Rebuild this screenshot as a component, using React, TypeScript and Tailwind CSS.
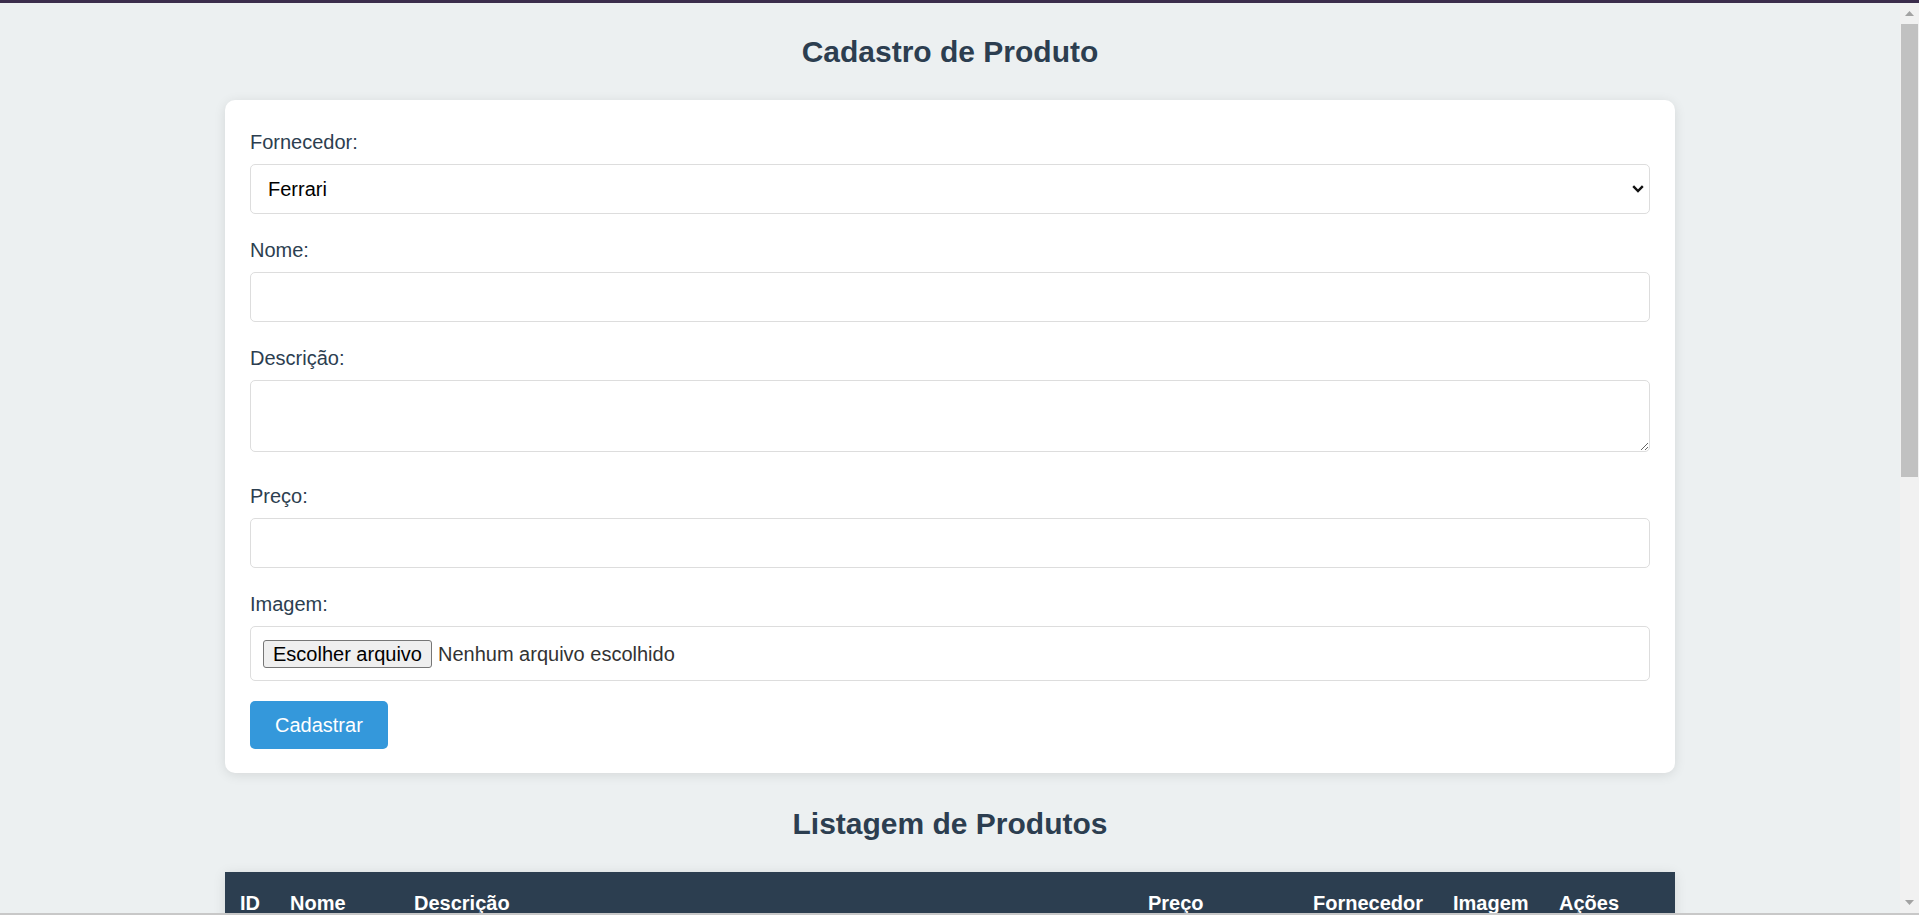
import { useState } from 'react';

const fornecedores = ['Ferrari', 'Lamborghini', 'Porsche'];

const colunas = [
  { label: 'ID', width: 'w-[50px]' },
  { label: 'Nome', width: 'w-[124px]' },
  { label: 'Descrição', width: 'w-[734px]' },
  { label: 'Preço', width: 'w-[165px]' },
  { label: 'Fornecedor', width: 'w-[140px]' },
  { label: 'Imagem', width: 'w-[106px]' },
  { label: 'Ações', width: 'w-[131px]' },
];

function Label({ children }: { children: React.ReactNode }) {
  return <label className="block text-[20px] leading-[32px] mb-[6px] text-[#2c3e50]">{children}</label>;
}

function Scrollbar() {
  return (
    <div className="w-[19px] shrink-0 bg-[#f1f1f1] flex flex-col items-center">
      <div className="h-[21px] w-full flex items-center justify-center">
        <svg width="9" height="5" viewBox="0 0 9 5">
          <path d="M4.5 0 L9 5 L0 5 Z" fill="#a3a3a3" />
        </svg>
      </div>
      <div className="w-[17px] h-[453px] bg-[#c1c1c1]" />
      <div className="flex-1" />
      <div className="h-[21px] w-full flex items-center justify-center">
        <svg width="9" height="5" viewBox="0 0 9 5">
          <path d="M0 0 L9 0 L4.5 5 Z" fill="#a3a3a3" />
        </svg>
      </div>
    </div>
  );
}

export default function App() {
  const [fornecedor, setFornecedor] = useState('Ferrari');
  const [nome, setNome] = useState('');
  const [descricao, setDescricao] = useState('');
  const [preco, setPreco] = useState('');

  const inputClass =
    'block w-full h-[50px] px-[12px] border border-[#ddd] rounded-[5px] bg-white text-[20px] text-black outline-none';

  return (
    <div
      className="h-screen flex flex-col overflow-hidden bg-[#ecf0f1]"
      style={{ fontFamily: '"Liberation Sans", Arial, sans-serif' }}
    >
      <div className="h-[3px] shrink-0 bg-[#3b2d4c]" />
      <div className="flex flex-1 min-h-0">
        <main className="flex-1 overflow-hidden">
          <h2 className="mt-[25px] mb-[24px] text-center text-[30px] leading-[48px] font-bold text-[#2c3e50]">
            Cadastro de Produto
          </h2>

          <form
            className="max-w-[1450px] mx-auto bg-white rounded-[10px] shadow-[0_2px_12px_rgba(0,0,0,0.1)] pt-[26px] px-[25px] pb-[24px]"
            onSubmit={(e) => e.preventDefault()}
          >
            <div className="mb-[20px]">
              <Label>Fornecedor:</Label>
              <div className="relative">
                <select
                  value={fornecedor}
                  onChange={(e) => setFornecedor(e.target.value)}
                  className="block w-full h-[50px] pl-[17px] pr-[40px] border border-[#ddd] rounded-[5px] bg-white text-[20px] text-black appearance-none outline-none"
                >
                  {fornecedores.map((f) => (
                    <option key={f} value={f}>
                      {f}
                    </option>
                  ))}
                </select>
                <svg
                  className="absolute right-[6px] top-[21px] pointer-events-none"
                  width="12"
                  height="8"
                  viewBox="0 0 12 8"
                  fill="none"
                >
                  <path d="M1.2 1.2 L6 6 L10.8 1.2" stroke="#111" strokeWidth="2.4" />
                </svg>
              </div>
            </div>

            <div className="mb-[20px]">
              <Label>Nome:</Label>
              <input type="text" value={nome} onChange={(e) => setNome(e.target.value)} className={inputClass} />
            </div>

            <div className="mb-[28px]">
              <Label>Descrição:</Label>
              <textarea
                value={descricao}
                onChange={(e) => setDescricao(e.target.value)}
                className="block w-full h-[72px] px-[12px] py-[12px] border border-[#ddd] rounded-[5px] bg-white text-[20px] text-black outline-none resize-y"
              />
            </div>

            <div className="mb-[20px]">
              <Label>Preço:</Label>
              <input type="text" value={preco} onChange={(e) => setPreco(e.target.value)} className={inputClass} />
            </div>

            <div className="mb-[20px]">
              <Label>Imagem:</Label>
              <div className="h-[55px] px-[12px] flex items-center gap-[6px] border border-[#ddd] rounded-[5px] bg-white">
                <span className="h-[28px] px-[9px] flex items-center bg-[#efefef] border border-[#767676] rounded-[3px] text-[20px] text-black">
                  Escolher arquivo
                </span>
                <span className="text-[20px] text-[#333]">Nenhum arquivo escolhido</span>
              </div>
            </div>

            <button
              type="submit"
              className="h-[48px] px-[25px] bg-[#3498db] text-white text-[20px] rounded-[5px]"
            >
              Cadastrar
            </button>
          </form>

          <h2 className="mt-[27px] mb-[24px] text-center text-[30px] leading-[48px] font-bold text-[#2c3e50]">
            Listagem de Produtos
          </h2>

          <div className="max-w-[1450px] mx-auto bg-white shadow-[0_2px_12px_rgba(0,0,0,0.1)]">
            <table className="w-full table-fixed border-collapse">
              <thead>
                <tr className="bg-[#2c3e50]">
                  {colunas.map((c) => (
                    <th
                      key={c.label}
                      className={`${c.width} px-[15px] py-[15px] text-left text-[20px] leading-[32px] font-bold text-white`}
                    >
                      {c.label}
                    </th>
                  ))}
                </tr>
              </thead>
              <tbody />
            </table>
          </div>
        </main>
        <Scrollbar />
      </div>
      <div className="h-[2px] shrink-0 bg-[#c8c8c8]" />
    </div>
  );
}
